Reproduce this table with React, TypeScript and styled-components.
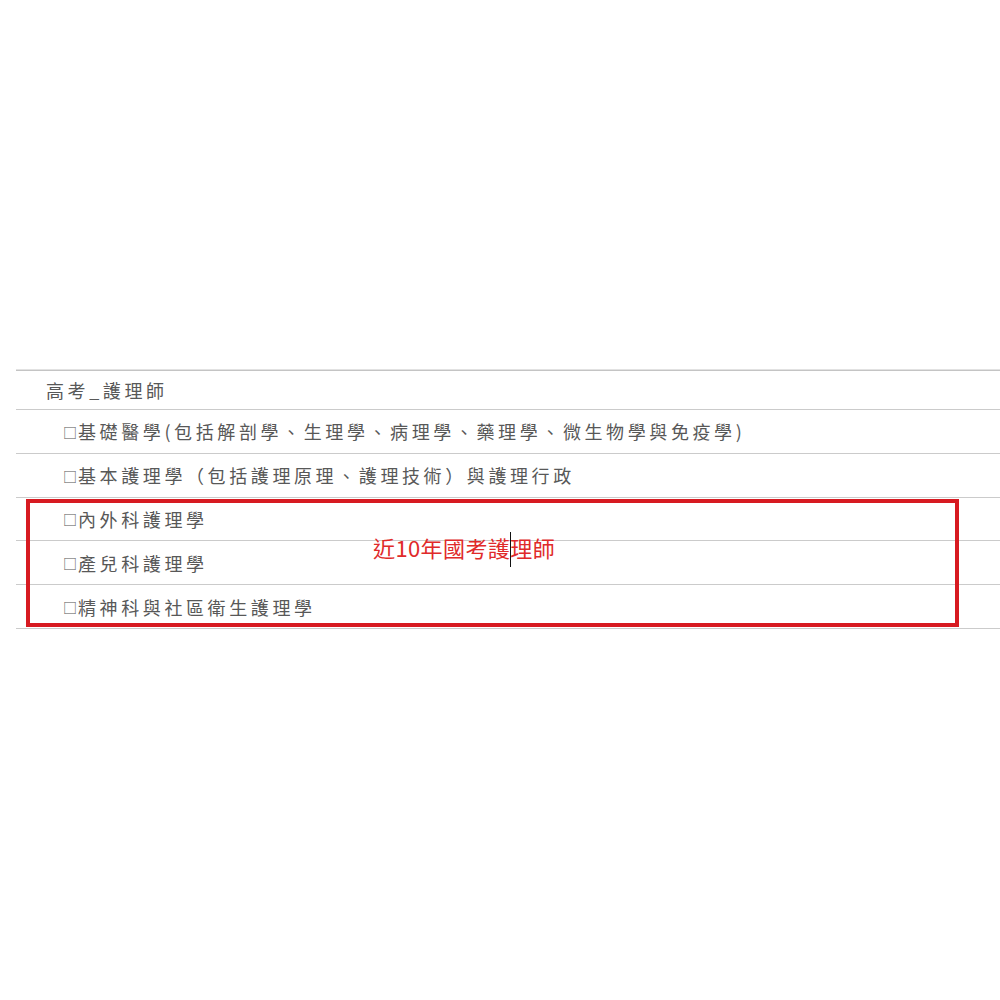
import React from 'react';
import styled, { createGlobalStyle } from 'styled-components';

const SUBJECTS = [
  '基礎醫學(包括解剖學、生理學、病理學、藥理學、微生物學與免疫學)',
  '基本護理學（包括護理原理、護理技術）與護理行政',
  '內外科護理學',
  '產兒科護理學',
  '精神科與社區衛生護理學',
];

export default function App() {
  const rowsMarkup = SUBJECTS.map((subject) => (
    <ItemRow key={subject}>
      <Box>□</Box>
      {subject}
    </ItemRow>
  ));

  return (
    <>
      <GlobalStyle />
      <Page>
        <ListWrapper>
          <HeaderRow>高考_護理師</HeaderRow>
          {rowsMarkup}
          <Highlight />
          <Note>
            近10年國考護
            <Caret />
            理師
          </Note>
        </ListWrapper>
      </Page>
    </>
  );
}

const GlobalStyle = createGlobalStyle`
  html, body {
    margin: 0;
    padding: 0;
    background: #fff;
  }
  body {
    font-family: "Noto Sans CJK TC", "Noto Sans", sans-serif;
  }
`;

const Page = styled.div`
  width: 1000px;
  height: 1000px;
  overflow: hidden;
  padding: 369px 0 0 16px;
  box-sizing: border-box;
`;

const ListWrapper = styled.div`
  position: relative;
  border-top: 1px solid #e2e2e2;
  box-shadow: inset 0 1px 0 #c4c4c4;
  color: #585858;
  font-size: 18px;
  letter-spacing: 3.6px;
`;

const HeaderRow = styled.div`
  display: flex;
  align-items: center;
  height: 40px;
  padding-left: 30px;
  padding-top: 1px;
  box-sizing: border-box;
  border-bottom: 1px solid #cbcbcb;
  white-space: nowrap;
`;

const ItemRow = styled.div`
  display: flex;
  align-items: center;
  height: 42.8px;
  padding-left: 47px;
  border-bottom: 1px solid #cbcbcb;
  white-space: nowrap;
`;

const Box = styled.span`
  display: inline-block;
  width: 15px;
  font-size: 14px;
  line-height: 1;
  letter-spacing: 0;
  color: #555;
  margin-top: 1px;
`;

const Highlight = styled.div`
  position: absolute;
  left: 10px;
  top: 129px;
  width: 933px;
  height: 128px;
  border: 4px solid #d71a21;
  box-sizing: border-box;
  pointer-events: none;
`;

const Note = styled.div`
  position: absolute;
  left: 357px;
  top: 162px;
  color: #e02a2a;
  font-size: 22px;
  line-height: 26px;
  font-weight: 400;
  letter-spacing: 0.4px;
  white-space: nowrap;
`;

const Caret = styled.span`
  display: inline-block;
  width: 0;
  height: 35px;
  margin-right: -1px;
  border-left: 1px solid #111;
  vertical-align: -10px;
`;
